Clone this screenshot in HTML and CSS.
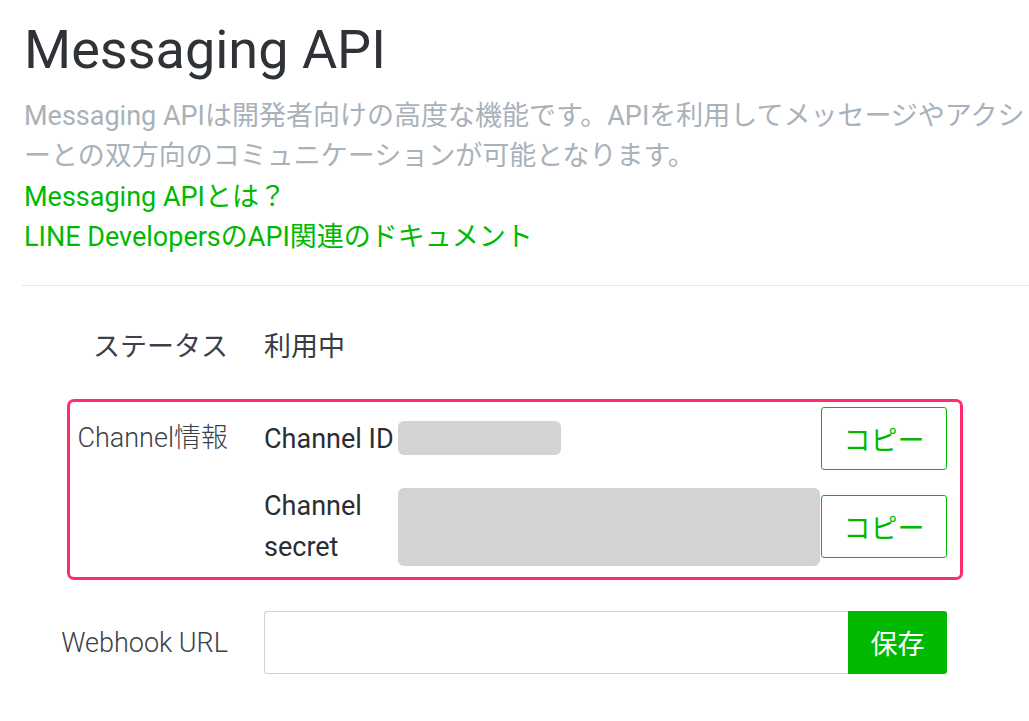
FILE: index.html
```html
<!DOCTYPE html>
<html lang="ja">
<head>
  <meta charset="UTF-8">
  <title>Messaging API設定</title>
  <link rel="stylesheet" href="styles.css">
</head>
<body>
  <div class="page">
    <h1 class="title">Messaging API</h1>
    <p class="lead">Messaging APIは開発者向けの高度な機能です。APIを利用してメッセージやアクションを通じて、ユーザ<br>ーとの双方向のコミュニケーションが可能となります。</p>
    <ul class="links">
      <li><a href="#">Messaging APIとは？</a></li>
      <li><a href="#">LINE DevelopersのAPI関連のドキュメント</a></li>
    </ul>
    <hr class="divider">

    <div class="form">
      <!-- ステータス -->
      <div class="row status-row">
        <div class="label">ステータス</div>
        <div class="value">利用中</div>
      </div>

      <!-- チャネル情報（赤枠） -->
      <div class="row channel-box">
        <div class="label channel-label">Channel情報</div>
        <div class="value">
          <div class="secret-row">
            <div class="key">Channel ID</div>
            <div class="mask mask-id"></div>
            <button class="copy-btn">コピー</button>
          </div>
          <div class="secret-row">
            <div class="key">Channel secret</div>
            <div class="mask mask-secret"></div>
            <button class="copy-btn">コピー</button>
          </div>
        </div>
      </div>

      <!-- Webhook -->
      <div class="row webhook-row">
        <div class="label">Webhook URL</div>
        <div class="value input-group">
          <input type="text" class="url-input">
          <button class="save-btn">保存</button>
        </div>
      </div>
    </div>
  </div>
</body>
</html>
```

FILE: styles.css
```css
html, body {
  margin: 0;
  padding: 0;
  background: #fff;
  overflow: hidden;
}

body {
  font-family: Roboto, "Noto Sans CJK JP", sans-serif;
  font-size: 27px;
  line-height: 40.5px;
  color: #383c42;
}

.page {
  padding: 18px 0 0 24px;
}

.title {
  margin: 0;
  font-size: 54px;
  font-weight: 400;
  line-height: 64.8px;
  color: #2f3338;
}

.lead {
  margin: 13px 0 0;
  color: #a9b1ba;
  white-space: nowrap;
}

.links {
  list-style: none;
  margin: 0;
  padding: 0;
}

.links a {
  color: #00b900;
  text-decoration: none;
}

.divider {
  border: none;
  border-top: 1px solid #e6e6e6;
  margin: 27px 0 0 -2px;
}

.form {
  margin: 41px 0 0 43px;
  width: 896px;
}

.row {
  display: grid;
  grid-template-columns: 150px 1fr;
  column-gap: 36px;
  padding: 0 16px 0 11px;
}

.label {
  display: flex;
  justify-content: flex-end;
  font-weight: 300;
  color: #3c4047;
  white-space: nowrap;
}

.status-row .label {
  font-weight: 400;
}

.status-row .value {
  color: #383c42;
}

.channel-box {
  margin-top: 32px;
  border: 3px solid #ff2d6b;
  border-radius: 7px;
  padding: 5px 13px 10px 8px;
}

.channel-label {
  line-height: 63px;
  align-self: start;
}

.secret-row {
  display: grid;
  grid-template-columns: 133px 1fr 126px;
  column-gap: 1px;
  align-items: center;
}

.secret-row + .secret-row {
  margin-top: 16px;
}

.key {
  font-weight: 400;
  color: #2a2e33;
}

.mask {
  background: #d3d3d3;
  border-radius: 6px;
}

.mask-id {
  width: 163px;
  height: 34px;
  margin-top: -2px;
}

.mask-secret {
  height: 78px;
}

.copy-btn {
  height: 63px;
  background: #fff;
  border: 1px solid #00b900;
  border-radius: 3px;
  color: #00b900;
  font-family: inherit;
  font-size: 27px;
  padding: 0;
  cursor: pointer;
}

.webhook-row {
  margin-top: 31px;
  align-items: center;
}

.input-group {
  display: flex;
}

.url-input {
  flex: 1;
  height: 63px;
  box-sizing: border-box;
  border: 1px solid #cdd3dc;
  border-right: none;
  border-radius: 3px 0 0 3px;
  font-size: 27px;
  padding: 0 12px;
  min-width: 0;
}

.save-btn {
  width: 99px;
  height: 63px;
  background: #00b900;
  border: none;
  border-radius: 0 3px 3px 0;
  color: #fff;
  font-family: inherit;
  font-size: 27px;
  padding: 0;
  cursor: pointer;
}
```
